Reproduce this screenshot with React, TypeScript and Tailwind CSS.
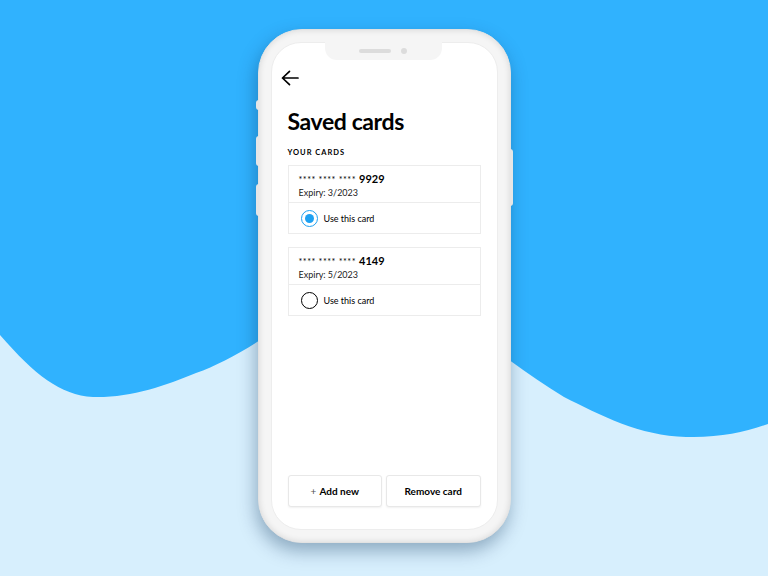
interface CardProps {
  last4: string;
  expiry: string;
  selected?: boolean;
}

function SavedCard({ last4, expiry, selected = false }: CardProps) {
  return (
    <div className="border border-[#ececec] bg-white">
      <div className="h-[37px] px-[10px] pt-[7px] border-b border-[#ececec]">
        <div className="flex items-baseline gap-[3px] leading-none">
          <span className="text-[9px] tracking-[0.5px] text-black">**** **** ****</span>
          <span className="text-[11px] font-bold text-black">{last4}</span>
        </div>
        <div className="mt-[4px] text-[9px] leading-none text-[#222]">Expiry: {expiry}</div>
      </div>
      <div className="h-[30px] flex items-center px-[12px] gap-[6px]">
        {selected ? (
          <div className="w-[17px] h-[17px] rounded-full border-[1.5px] border-[#1da1f2] flex items-center justify-center">
            <div className="w-[9px] h-[9px] rounded-full bg-[#1da1f2]" />
          </div>
        ) : (
          <div className="w-[17px] h-[17px] rounded-full border-[1.5px] border-black" />
        )}
        <span className="text-[9px] text-black">Use this card</span>
      </div>
    </div>
  );
}

function Phone() {
  return (
    <div className="relative -mt-[4px] w-[253px] h-[514px] rounded-[44px] bg-[#f5f5f5] border border-[#e2e2e2] shadow-[-2px_8px_18px_rgba(0,40,80,0.35),inset_0_0_6px_rgba(0,0,0,0.12)] p-[12px]">
      {/* side buttons */}
      <div className="absolute left-[-3px] top-[70px] w-[3px] h-[10px] rounded-l bg-[#e6e6e6]" />
      <div className="absolute left-[-3px] top-[106px] w-[3px] h-[30px] rounded-l bg-[#e6e6e6]" />
      <div className="absolute left-[-3px] top-[154px] w-[3px] h-[32px] rounded-l bg-[#e6e6e6]" />
      <div className="absolute right-[-3px] top-[119px] w-[3px] h-[57px] rounded-r bg-[#e6e6e6]" />

      <div className="relative h-full rounded-[30px] bg-white border border-[#ededed] flex flex-col px-[16px] pt-[27px] pb-[22px] font-['Lato',sans-serif]">
        {/* notch */}
        <div className="absolute left-[53px] top-[-1px] w-[117px] h-[18px] bg-[#f5f5f5] rounded-b-[12px] flex items-center justify-center gap-[10px]">
          <div className="w-[32px] h-[4px] rounded-full bg-[#dcdcdc]" />
          <div className="w-[6px] h-[6px] rounded-full bg-[#dcdcdc]" />
        </div>

        <svg className="-ml-[7px] w-[18px] h-[16px]" viewBox="0 0 18 16" fill="none" stroke="black" strokeWidth={1.7} strokeLinecap="round" strokeLinejoin="round">
          <path d="M17 8 H1.5 M8.5 1.3 L1.5 8 L8.5 14.7" />
        </svg>

        <h1 className="mt-[19px] text-[23px] leading-[32px] font-bold text-black tracking-[-0.4px]">Saved cards</h1>
        <div className="mt-[10px] text-[7.5px] font-bold tracking-[1px] text-black">YOUR CARDS</div>

        <div className="mt-[7px] flex flex-col gap-[13px]">
          <SavedCard last4="9929" expiry="3/2023" selected />
          <SavedCard last4="4149" expiry="5/2023" />
        </div>

        <div className="mt-auto flex gap-[4px]">
          <button className="flex-1 h-[32px] rounded-[3px] border border-[#e8e8e8] bg-white shadow-[0_1px_2px_rgba(0,0,0,0.06)] text-[10px] font-bold text-black">
            <span className="font-normal text-[#555] mr-[3px]">+</span>Add new
          </button>
          <button className="flex-1 h-[32px] rounded-[3px] border border-[#e8e8e8] bg-white shadow-[0_1px_2px_rgba(0,0,0,0.06)] text-[10px] font-bold text-black">
            Remove card
          </button>
        </div>
      </div>
    </div>
  );
}

export default function App() {
  return (
    <div className="relative w-[768px] h-[576px] overflow-hidden bg-[#d7effd]">
      <svg className="absolute inset-0" width="768" height="576" viewBox="0 0 768 576">
        <path
          d="M0 0 H768 V424 C745 432 720 438 686 437 C640 436 600 415 564 397 C545 385 528 374 512 362 C470 330 420 300 384 300 C340 300 295 318 257 342 C235 356 215 366 196 373 C165 386 130 398 93 397 C60 395 35 375 0 335 Z"
          fill="#30b2fe"
        />
      </svg>
      <div className="relative h-full flex items-center justify-center">
        <Phone />
      </div>
    </div>
  );
}
